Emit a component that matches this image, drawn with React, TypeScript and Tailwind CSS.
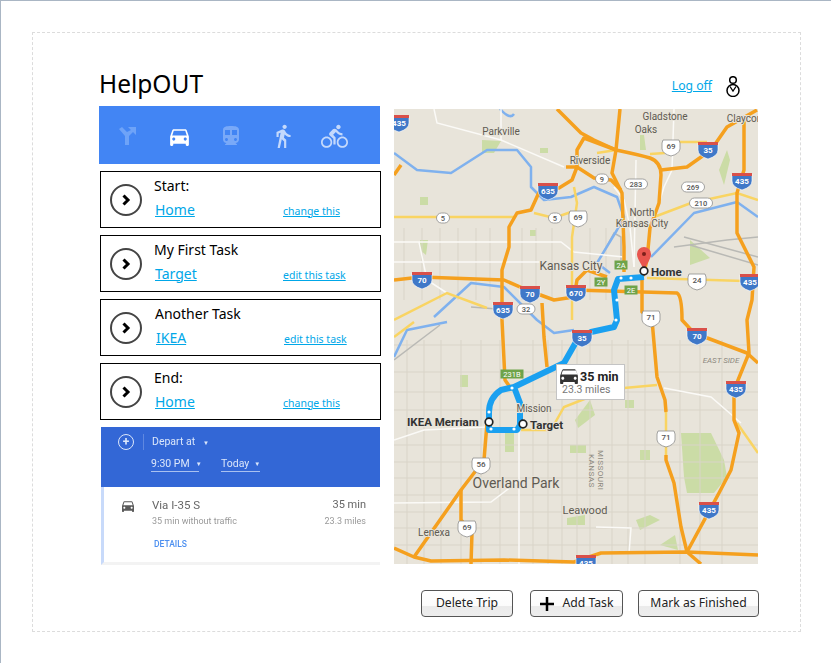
import { MdDirectionsBike, MdDirectionsCar, MdDirectionsTransit, MdDirectionsWalk } from "react-icons/md";

const ORANGE = [
  "M557 109 L581 133 L594 140 L616 150 Q640 155 650 158 Q661 162 661 175 L659 203 L650 228 L647 260 L643 276",
  "M620 109 L616 150 L612 173 L622 193 L624 247 L624 272",
  "M566 167 L577 167 L572 180 L559 188 L541 188 L531 210 L517 213 L509 227 L509 247 L502 270 L502 320 L505 380 L512 390",
  "M616 150 L584 138 L577 150 L577 167 L594 178 L611 180 L621 190",
  "M394 280 L421 277 L504 280 L527 290 L554 300 L574 297 L577 280 L587 270 L607 277",
  "M574 290 L677 293 Q682 296 682 320 L694 333 L747 353 L758 363",
  "M642 277 L642 312 L652 320 L657 377 L665 400 L666 412",
  "M666 455 L666 460 L674 483 L681 527 L687 552",
  "M744 117 L744 170 L737 193 L737 233 L754 267 L752 300 L747 320 L749 353 L734 390 L734 420 L739 433 L731 470 L719 493 L687 552",
  "M661 170 L687 167 L711 150 L727 127 L757 110",
  "M487 423 L484 460 L461 490 L414 557",
  "M461 490 L461 520 L472 533 L471 564",
  "M394 548 L414 557 L431 561 L504 560 L574 562 L601 553 L687 552 L701 564",
  "M687 552 L758 555",
  "M542 303 L544 337 L547 367",
  "M394 175 L401 165",
];

const YELLOW = [
  "M394 217 L514 217",
  "M534 213 L554 218 L571 212",
  "M574 187 L577 203 L572 237 L572 320",
  "M597 153 L616 150 M650 154 L665 153 M677 142 L707 142",
  "M654 217 L691 203 L737 193 L758 200",
  "M647 278 L744 281",
  "M394 320 L447 293 L487 308",
  "M394 337 L414 322",
  "M624 388 L657 385",
  "M521 430 L551 430 L564 407 L587 398",
  "M666 412 L666 455",
  "M737 423 L758 453",
];

const RIVER = [
  "M394 153 L417 170 L451 173 L487 150 L517 150 L531 167 L531 187 L544 200 L571 197 L594 187 L617 197 L624 217 L617 230 L597 263 L610 273",
  "M651 257 L694 213 L737 202 L758 217",
  "M434 317 L471 283 L504 287 L537 320 L554 333 L574 330",
  "M394 357 L407 330 L447 322",
  "M500 109 Q510 120 514 114",
];

const WHITE = [
  "M434 109 L437 123 L501 140 L564 167",
  "M501 109 L501 140",
  "M394 242 L561 242 L574 252 L624 257",
  "M394 262 L541 262",
  "M419 242 L427 280 L447 293",
  "M636 160 L634 267",
  "M674 109 L672 170 L664 187 L657 210",
  "M394 440 L424 430 L487 427",
  "M519 430 L519 564",
  "M664 388 L711 397 L741 423",
  "M394 503 L491 502 L520 480",
  "M596 527 L631 528 L629 553",
  "M614 187 L624 200 L630 227 L634 267",
];

const RAIL = [
  "M674 247 L727 240 L758 237",
  "M684 237 L758 257",
  "M690 245 L758 265",
  "M471 307 L510 310",
  "M394 360 L440 325",
  "M601 257 L614 233 L621 237 L621 260",
];

const GREEN = [
  "M482 140 L501 141 L494 153 L482 153 Z",
  "M681 433 L711 433 L724 460 L727 477 L714 493 L687 493 L684 477 Z",
  "M505 432 L514 432 L514 452 L505 452 Z",
  "M640 150 L646 150 L644 135 L640 135 Z",
  "M719 170 L727 150 L730 160 L724 185 Z",
  "M540 148 L548 148 L548 153 L540 153 Z",
  "M420 197 L428 197 L428 205 L420 205 Z",
  "M530 230 L536 230 L536 236 L530 236 Z",
  "M420 240 L428 240 L426 255 L420 250 Z",
  "M690 240 L710 258 L690 265 Z",
  "M570 445 L586 445 L586 453 L570 453 Z",
  "M460 375 L468 375 L468 387 L460 387 Z",
  "M625 400 L634 400 L634 408 L625 408 Z",
  "M640 450 L650 450 L650 460 L640 460 Z",
  "M567 518 L585 515 L585 525 L567 525 Z",
  "M636 520 L650 515 L660 520 L640 530 Z",
  "M660 545 L675 535 L678 550 Z",
  "M575 420 L590 400 L595 415 L578 428 Z",
];

const STREET_X = [407, 424, 441, 461, 481, 500, 533, 548, 562, 577, 590, 612, 628, 645, 680, 700, 722];
const STREET_Y = [345, 372, 392, 410, 445, 462, 478, 495, 512, 528, 545];
const NORTH_X = [404, 422, 440, 458, 476, 490, 522, 536, 552, 590, 606];
const streets =
  STREET_X.map((x) => `M${x} 340 L${x} 564`).join(" ") +
  " " +
  STREET_Y.map((y) => `M394 ${y} L758 ${y}`).join(" ") +
  " " +
  NORTH_X.map((x) => `M${x} 228 L${x} 300`).join(" ");

const INTERSTATES: [number, number, string][] = [
  [399, 122, "435"], [708, 149, "35"], [742, 180, "435"], [548, 190, "635"], [422, 279, "70"],
  [530, 293, "70"], [576, 292, "670"], [503, 309, "635"], [750, 281, "435"], [582, 337, "35"],
  [697, 335, "70"], [736, 388, "435"], [709, 509, "435"], [586, 562, "435"],
];
const US: [number, number, string][] = [
  [671, 146, "69"], [578, 217, "69"], [697, 280, "24"], [651, 317, "71"], [666, 437, "71"], [481, 464, "56"], [467, 527, "69"],
];
const OVALS: [number, number, string][] = [
  [602, 179, "9"], [636, 184, "283"], [693, 187, "269"], [701, 203, "210"], [443, 218, "5"], [555, 218, "5"], [526, 309, "32"],
];
const EXITS: [number, number, string][] = [
  [621, 265, "2A"], [601, 282, "2Y"], [631, 290, "2E"], [512, 374, "231B"],
];
const PLACES: [number, number, string, number][] = [
  [501, 135, "Parkville", 10], [665, 120, "Gladstone", 10], [646, 133, "Oaks", 10], [749, 122, "Claycomo", 10],
  [590, 164, "Riverside", 10], [642, 216, "North", 10], [642, 227, "Kansas City", 10], [571, 270, "Kansas City", 12],
  [534, 412, "Mission", 10], [516, 488, "Overland Park", 14], [585, 514, "Leawood", 11], [434, 536, "Lenexa", 10],
];

function MapPicture() {
  const dots = [[616, 320], [617, 300], [621, 278], [631, 278], [489, 412], [491, 429], [514, 429], [512, 388]];
  return (
    <svg viewBox="394 109 364 455" className="block h-[455px] w-[364px] shrink-0 bg-[#e8e4da]" style={{ fontFamily: "Roboto, sans-serif" }}>
      {GREEN.map((d) => <path key={d} d={d} fill="#cbdca6" />)}
      <path d={streets} stroke="#d9d4c8" strokeWidth="1" fill="none" />
      {RAIL.map((d) => <path key={d} d={d} stroke="#b9b9b5" strokeWidth="1.5" fill="none" />)}
      {RIVER.map((d) => <path key={d} d={d} stroke="#7fb1ee" strokeWidth="2.5" fill="none" strokeLinejoin="round" />)}
      {WHITE.map((d) => <path key={d} d={d} stroke="#fbfaf7" strokeWidth="1.5" fill="none" />)}
      {YELLOW.map((d) => <path key={d} d={d} stroke="#f9d462" strokeWidth="2.5" fill="none" />)}
      {ORANGE.map((d) => <path key={d} d={d} stroke="#f5a01e" strokeWidth="3.5" fill="none" strokeLinejoin="round" />)}
      <path
        d="M644 277 L618 279 L614 290 L617 320 L614 327 L591 332 L576 342 L564 363 L514 387 L501 390 Q489 398 489 412 L489 430 L517 430 L520 425 L520 403 L514 387"
        stroke="#1aa0f0"
        strokeWidth="6"
        fill="none"
        strokeLinejoin="round"
      />
      {dots.map(([x, y]) => <circle key={`${x}-${y}`} cx={x} cy={y} r="1.600" fill="#fff" />)}

      {INTERSTATES.map(([x, y, n]) => (
        <g key={`${x}-${y}`}>
          <path d={`M${x - 10} ${y - 6} h20 v7 q0 6 -10 9 q-10 -3 -10 -9 z`} fill="#3f78c8" stroke="#fff" strokeWidth="0.6" />
          <rect x={x - 10} y={y - 7} width="20" height="3" fill="#d9504a" />
          <text x={x} y={y + 4} textAnchor="middle" fontSize="8" fontWeight="700" fill="#fff">{n}</text>
        </g>
      ))}
      {US.map(([x, y, n]) => (
        <g key={`${x}-${y}`}>
          <path d={`M${x - 8} ${y - 6} h16 l1 3 v6 q-1 5 -9 7 q-8 -2 -9 -7 v-6 z`} fill="#fff" stroke="#8d8d8d" strokeWidth="0.8" />
          <text x={x} y={y + 3} textAnchor="middle" fontSize="8" fontWeight="500" fill="#555">{n}</text>
        </g>
      ))}
      {OVALS.map(([x, y, n]) => {
        const w = n.length * 5 + 8;
        return (
          <g key={`${x}-${y}`}>
            <rect x={x - w / 2} y={y - 5} width={w} height="10" rx="5" fill="#fff" stroke="#8d8d8d" strokeWidth="0.8" />
            <text x={x} y={y + 3} textAnchor="middle" fontSize="7.5" fontWeight="500" fill="#555">{n}</text>
          </g>
        );
      })}
      {EXITS.map(([x, y, n]) => {
        const w = n.length * 5 + 3;
        return (
          <g key={`${x}-${y}`}>
            <rect x={x - w / 2} y={y - 4.5} width={w} height="9" fill="#6ea34a" />
            <text x={x} y={y + 3} textAnchor="middle" fontSize="7.5" fill="#fff">{n}</text>
          </g>
        );
      })}
      {PLACES.map(([x, y, n, size]) => (
        <text key={`${x}-${y}`} x={x} y={y} textAnchor="middle" fontSize={size} fill="#5f5b52" stroke="#e8e4da" strokeWidth="2" paintOrder="stroke">{n}</text>
      ))}
      <text x={721} y={363} textAnchor="middle" fontSize="8" fontStyle="italic" fill="#8c887e">EAST SIDE</text>
      <text transform="translate(598 450) rotate(90)" fontSize="8" fill="#8c887e" letterSpacing="0.5">MISSOURI</text>
      <text transform="translate(589 454) rotate(90)" fontSize="8" fill="#8c887e" letterSpacing="0.5">KANSAS</text>

      <path d="M644 272 C642 263 637 260 637 254 a7 7 0 0 1 14 0 C651 260 646 263 644 272 Z" fill="#e8554e" />
      <circle cx="644" cy="254" r="2" fill="#7d1f1a" />
      {[[644, 271], [489, 422], [523, 424]].map(([x, y]) => (
        <circle key={x} cx={x} cy={y} r="3.800" fill="#fff" stroke="#222" strokeWidth="1.700" />
      ))}
      <g fontSize="11.5" fontWeight="700" fill="#333" stroke="#e8e4da" strokeWidth="2" paintOrder="stroke">
        <text x={651} y={276}>Home</text>
        <text x={407} y={426}>IKEA Merriam</text>
        <text x={530} y={429}>Target</text>
      </g>

      <rect x="556.5" y="364.5" width="68" height="35" fill="#fff" stroke="#c4c4c4" />
      <path
        d="M576 370.500c-.3-.8-1-1.300-1.900-1.300h-10.200c-.9 0-1.600.5-1.900 1.300l-1.900 5.300v7.200c0 .6.400 1 1 1h1.200c.6 0 1-.4 1-1v-1h11.400v1c0 .6.400 1 1 1h1.200c.6 0 1-.4 1-1v-7.200zM562.800 379.800c-.8 0-1.500-.7-1.500-1.500s.7-1.500 1.500-1.500 1.500.7 1.500 1.500-.7 1.500-1.500 1.500zm12.400 0c-.8 0-1.500-.7-1.500-1.500s.7-1.500 1.500-1.500 1.500.7 1.500 1.500-.7 1.500-1.500 1.500zm-13.700-5.300l1.300-4h13.400l1.300 4z"
        fill="#333"
      />
      <text x="580" y="381" fontSize="12.5" fontWeight="700" fill="#222">35 min</text>
      <text x="562" y="393" fontSize="10.5" fill="#777">23.3 miles</text>
    </svg>
  );
}

function RouteCard({ label, place, action, shift }: { label: string; place: string; action: string; shift?: boolean }) {
  return (
    <div className="flex h-[57px] w-[281px] items-center border-[1.5px] border-black pl-[9px]">
      <div className="flex h-[32px] w-[32px] shrink-0 items-center justify-center rounded-full border-2 border-[#444]">
        <svg viewBox="0 0 12 12" className="h-[12px] w-[12px]">
          <path d="M3.500 1.500 L8 6 L3.500 10.500" stroke="#000" strokeWidth="3" fill="none" />
        </svg>
      </div>
      <div className={shift ? "ml-[13px] flex-1 pb-[4px]" : "ml-[12px] flex-1 pb-[4px]"}>
        <div className="text-[14px] leading-[18px] text-black">{label}</div>
        <div className="mt-[6px] flex items-baseline">
          <a className="ml-px w-[128px] text-[14px] leading-[18px] text-[#00a7e8] underline">{place}</a>
          <a className="text-[10.500px] leading-[14px] text-[#00a7e8] underline">{action}</a>
        </div>
      </div>
    </div>
  );
}

function ActionButton({ width, children }: { width: string; children: React.ReactNode }) {
  return (
    <button className={`${width} flex h-[27px] items-center justify-center gap-[9px] rounded-[4px] border border-[#555] bg-[linear-gradient(#ffffff_0%,#fbfbfb_60%,#ebebeb_61%,#ededed_100%)] text-[12.200px] text-[#222]`}>
      {children}
    </button>
  );
}

export default function App() {
  return (
    <div
      className="h-[663px] w-[831px] overflow-hidden border-l border-t border-[#aab6c4] bg-white pl-[31px] pt-[31px]"
      style={{ fontFamily: '"Noto Sans", "Open Sans", sans-serif' }}
    >
      <div className="h-[600px] w-[769px] border border-dashed border-[#dcdcdc] pl-[66px] pr-[41px]">
        {/* Header */}
        <div className="flex h-[73px] items-end justify-between pb-[4px]">
          <h1 className="text-[24.500px] leading-[36px] text-black">HelpOUT</h1>
          <div className="mb-[5px] flex items-center gap-[13px] pr-[18px]">
            <a className="text-[12.200px] text-[#00a7e8] underline">Log off</a>
            <svg viewBox="0 0 16 21" className="h-[21px] w-[16px]">
              <circle cx="8" cy="4" r="3.300" fill="none" stroke="#000" strokeWidth="1.500" />
              <circle cx="8" cy="14.500" r="6" fill="none" stroke="#000" strokeWidth="1.500" />
              <path d="M5 10.500 L8 15 L11 10.500" fill="none" stroke="#000" strokeWidth="1.300" />
            </svg>
          </div>
        </div>

        <div className="flex">
          {/* Left column */}
          <div className="w-[295px] shrink-0">
            <div className="flex h-[58px] w-[281px] items-center bg-[#4285f4] pl-[16px] pt-[2px]">
              <svg viewBox="0 0 24 24" className="h-[24px] w-[24px] text-[#6ea3f8]">
                <path d="M13 3 h8 v8 l-3 -3 -4 4 v9 h-4 v-9 l-6 -7 3 -2 5 5 4 -2 z" fill="currentColor" />
              </svg>
              <MdDirectionsCar className="ml-[28px] h-[25px] w-[25px] text-white" />
              <MdDirectionsTransit className="ml-[27px] h-[24px] w-[24px] text-[#79a9f8]" />
              <MdDirectionsWalk className="ml-[27px] h-[26px] w-[26px] text-[#c4d9fc]" />
              <MdDirectionsBike className="ml-[25px] h-[27px] w-[27px] text-[#c4d9fc]" />
            </div>

            <div className="mt-[7px] flex flex-col gap-[7px] pl-px">
              <RouteCard label="Start:" place="Home" action="change this" />
              <RouteCard label="My First Task" place="Target" action="edit this task" />
              <RouteCard label="Another Task" place="IKEA" action="edit this task" shift />
              <RouteCard label="End:" place="Home" action="change this" />
            </div>

            {/* Google directions panel */}
            <div className="ml-[2px] mt-[7px] w-[279px] blur-[0.4px]" style={{ fontFamily: "Roboto, sans-serif" }}>
              <div className="h-[60px] bg-[#3367d6] pl-[17px] pt-[7px] text-[#dbe6fa]">
                <div className="flex items-center">
                  <div className="flex h-[16px] w-[16px] items-center justify-center rounded-full border border-[#dbe6fa] text-[12px] font-bold leading-none">+</div>
                  <div className="ml-[9px] h-[16px] w-px bg-[#5f88e0]" />
                  <span className="ml-[8px] text-[10.500px] leading-[16px]">Depart at</span>
                  <span className="ml-[8px] text-[6px]">▼</span>
                </div>
                <div className="mt-[7px] flex whitespace-nowrap text-[10.500px] leading-[14px]">
                  <span className="ml-[33px] flex w-[48px] items-center gap-[6px] border-b border-[#a9c1f0]">9:30 PM <span className="text-[6px]">▼</span></span>
                  <span className="ml-[22px] flex w-[39px] items-center gap-[5px] border-b border-[#a9c1f0]">Today <span className="text-[6px]">▼</span></span>
                </div>
              </div>
              <div className="flex h-[78px] border-b-[3px] border-l-[3px] border-b-[#f3f3f3] border-l-[#c8dafa] bg-white pl-[16px] pt-[11px]">
                <MdDirectionsCar className="h-[16px] w-[16px] shrink-0 text-[#5a5a5a]" />
                <div className="ml-[16px] w-[90px] shrink-0 whitespace-nowrap">
                  <div className="text-[11.500px] leading-[14px] text-[#666]">Via I-35 S</div>
                  <div className="mt-[3px] text-[9px] leading-[12px] text-[#999]">35 min without traffic</div>
                  <div className="mt-[11px] ml-[2px] text-[8.500px] font-medium leading-[12px] text-[#4d90f0]">DETAILS</div>
                </div>
                <div className="ml-auto pr-[14px] text-right">
                  <div className="text-[11px] leading-[14px] text-[#666]">35 min</div>
                  <div className="mt-[3px] text-[9px] leading-[12px] text-[#999]">23.3 miles</div>
                </div>
              </div>
            </div>
          </div>

          <div className="mt-[3px]">
            <MapPicture />
          </div>
        </div>

        {/* Actions */}
        <div className="mt-[25px] flex justify-end gap-[15px]">
          <div className="mr-[2px]">
            <ActionButton width="w-[92px]">Delete Trip</ActionButton>
          </div>
          <ActionButton width="w-[93px]">
            <svg viewBox="0 0 14 14" className="h-[14px] w-[14px]">
              <path d="M7 0 V14 M0 7 H14" stroke="#000" strokeWidth="2.500" />
            </svg>
            Add Task
          </ActionButton>
          <ActionButton width="w-[121px]">Mark as Finished</ActionButton>
        </div>
      </div>
    </div>
  );
}
